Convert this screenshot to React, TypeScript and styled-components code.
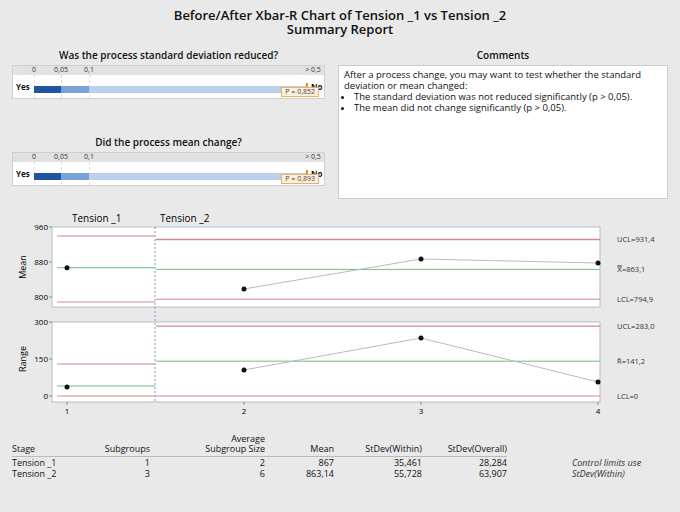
import React from "react";
import styled, { createGlobalStyle } from "styled-components";

const G = createGlobalStyle`
  body { margin:0; background:#e9e9e9; font-family:"Open Sans","Liberation Sans",sans-serif; color:#111; }
`;
const Page = styled.div`width:680px;height:512px;box-sizing:border-box;padding:8px 12px 0;display:flex;flex-direction:column;`;
const Title = styled.div`text-align:center;font-size:13px;line-height:14px;font-weight:600;`;
const Top = styled.div`display:flex;gap:13px;margin-top:13px;`;
const Left = styled.div`width:313px;display:flex;flex-direction:column;`;
const Q = styled.div`text-align:center;font-size:10px;font-weight:600;line-height:13px;margin-bottom:3px;`;
const Gap = styled.div<{h:number}>`height:${p => p.h}px;`;
const Box = styled.div`position:relative;height:34px;background:#fff;border:1px solid #d0d0d0;box-sizing:border-box;`;
const Strip = styled.div`height:9px;background:#e2e2e2;`;
const Tick = styled.span<{x:number}>`position:absolute;top:-1px;left:${p=>p.x}px;font-size:7px;color:#333;transform:translateX(-50%);white-space:nowrap;`;
const Guide = styled.div<{x:number}>`position:absolute;top:9px;bottom:0;left:${p=>p.x}px;border-left:1px dashed #ddd;`;
const Lab = styled.span<{x:number}>`position:absolute;top:15px;left:${p=>p.x}px;font-size:8px;font-weight:700;`;
const Track = styled.div`position:absolute;left:21px;top:20px;width:273px;height:7px;display:flex;`;
const Seg = styled.div<{w:number;c:string}>`width:${p=>p.w}px;background:${p=>p.c};`;
const Mark = styled.div`position:absolute;left:293px;top:17px;width:2px;height:11px;background:#e08a2a;`;
const PBox = styled.div`position:absolute;right:5px;bottom:1px;font-size:7px;line-height:8px;padding:0 3px;background:#fdf0dc;border:1px solid #e8b070;color:#444;`;
const Right = styled.div`flex:1;display:flex;flex-direction:column;`;
const Comments = styled.div`flex:0 0 134px;background:#fff;border:1px solid #ccc;box-sizing:border-box;padding:3px 5px;font-size:9.5px;line-height:11px;`;
const Ul = styled.ul`margin:0;padding-left:10px;`;
const Table = styled.div`margin-top:12px;display:grid;grid-template-columns:80px 58px 115px 69px 88px 85px 1fr;font-size:9px;line-height:10px;white-space:nowrap;`;
const Cell = styled.div<{r?:boolean;h?:boolean}>`text-align:${p=>p.r?"right":"left"};${p=>p.h?"border-bottom:1px solid #bbb;padding-bottom:2px;":""}align-self:end;`;
const Note = styled.div`grid-row:span 2;font-style:italic;padding-left:65px;line-height:11px;color:#333;`;

function Bar({p}:{p:string}){return <Box><Strip/>
  {[[21,"0"],[48,"0,05"],[76,"0,1"],[300,"> 0,5"]].map(([x,t])=><Tick key={t as string} x={x as number}>{t}</Tick>)}
  <Guide x={21}/><Guide x={48}/><Guide x={76}/>
  <Lab x={3}>Yes</Lab><Lab x={298}>No</Lab>
  <Track><Seg w={27} c="#1f55a0"/><Seg w={28} c="#79a2d8"/><Seg w={218} c="#bcd0ee"/></Track>
  <Mark/><PBox>P = {p}</PBox></Box>;}

const ym=(v:number)=>20+(960-v)*0.4375, yr=(v:number)=>115+(300-v)*0.2467;
const xs=[55,232,409,586];
function Charts(){
  const red="#d28a8a", grn="#6cc080";
  return <svg width="668" height="215" viewBox="0 0 668 215" style={{display:"block"}} fontFamily="Open Sans, Liberation Sans, sans-serif" fontSize="8">
    <text x="60" y="15" fontSize="10">Tension _1</text><text x="148" y="15" fontSize="10">Tension _2</text>
    {[[20,100],[115,195]].map(([a,b])=><rect key={a} x="40" y={a} width="548" height={b-a} fill="#fff" stroke="#bbb"/>)}
    <line x1="143" y1="20" x2="143" y2="195" stroke="#6a9cc8" strokeDasharray="2,2"/>
    <line x1="45" x2="143" y1="29" y2="29" stroke={red}/><line x1="144" x2="588" y1={ym(931.4)} y2={ym(931.4)} stroke={red} strokeWidth="1.3"/>
    <line x1="45" x2="143" y1={ym(867)} y2={ym(867)} stroke={grn}/><line x1="144" x2="588" y1={ym(863.1)} y2={ym(863.1)} stroke={grn}/>
    <line x1="45" x2="143" y1="95" y2="95" stroke={red}/><line x1="144" x2="588" y1={ym(794.9)} y2={ym(794.9)} stroke={red}/>
    <polyline points={`${xs[1]},82 ${xs[2]},52 ${xs[3]},56`} fill="none" stroke="#bbb"/>
    {[[0,ym(867)],[1,82],[2,52],[3,56]].map(([i,y])=><circle key={i} cx={xs[i]} cy={y} r="2.5" fill="#111"/>)}
    <line x1="45" x2="143" y1="157" y2="157" stroke={red}/><line x1="144" x2="588" y1={yr(283)} y2={yr(283)} stroke={red} strokeWidth="1.3"/>
    <line x1="45" x2="143" y1="179" y2="179" stroke={grn}/><line x1="144" x2="588" y1={yr(141.2)} y2={yr(141.2)} stroke={grn}/>
    <line x1="45" x2="588" y1="189" y2="189" stroke={red}/>
    <polyline points={`${xs[1]},163 ${xs[2]},131 ${xs[3]},175`} fill="none" stroke="#bbb"/>
    {[[0,180],[1,163],[2,131],[3,175]].map(([i,y])=><circle key={i} cx={xs[i]} cy={y} r="2.5" fill="#111"/>)}
    {[[960,20],[880,55],[800,90],[300,115],[150,152],[0,189]].map(([v,y])=><g key={v}><text x="36" y={y+3} textAnchor="end">{v}</text><line x1="37" x2="40" y1={y} y2={y} stroke="#888"/></g>)}
    {xs.map((x,i)=><g key={x}><line x1={x} x2={x} y1="195" y2="198" stroke="#888"/><text x={x} y="207" textAnchor="middle">{i+1}</text></g>)}
    <text transform="translate(14,60) rotate(-90)" textAnchor="middle" fontSize="9">Mean</text>
    <text transform="translate(14,152) rotate(-90)" textAnchor="middle" fontSize="9">Range</text>
    <g fontSize="7.5" fill="#333"><text x="605" y="35">UCL=931,4</text><text x="605" y="65">X̿=863,1</text><text x="605" y="95">LCL=794,9</text>
    <text x="605" y="122">UCL=283,0</text><text x="605" y="157">R̄=141,2</text><text x="605" y="192">LCL=0</text></g>
  </svg>;
}

export default function App(){return <><G/><Page>
  <Title>Before/After Xbar-R Chart of Tension _1 vs Tension _2</Title><Title>Summary Report</Title>
  <Top>
    <Left><Q>Was the process standard deviation reduced?</Q><Bar p="0,852"/><Gap h={37}/><Q>Did the process mean change?</Q><Bar p="0,893"/></Left>
    <Right><Q>Comments</Q><Comments>After a process change, you may want to test whether the standard deviation or mean changed:
      <Ul><li>The standard deviation was not reduced significantly (p &gt; 0,05).</li><li>The mean did not change significantly (p &gt; 0,05).</li></Ul></Comments></Right>
  </Top>
  <Gap h={8}/>
  <Charts/>
  <Table>
    <Cell h>Stage</Cell><Cell h r>Subgroups</Cell><Cell h r>Average<br/>Subgroup Size</Cell><Cell h r>Mean</Cell><Cell h r>StDev(Within)</Cell><Cell h r>StDev(Overall)</Cell><div/>
    <Cell>Tension _1</Cell><Cell r>1</Cell><Cell r>2</Cell><Cell r>867</Cell><Cell r>35,461</Cell><Cell r>28,284</Cell><Note>Control limits use<br/>StDev(Within)</Note>
    <Cell>Tension _2</Cell><Cell r>3</Cell><Cell r>6</Cell><Cell r>863,14</Cell><Cell r>55,728</Cell><Cell r>63,907</Cell>
  </Table>
</Page></>;}
